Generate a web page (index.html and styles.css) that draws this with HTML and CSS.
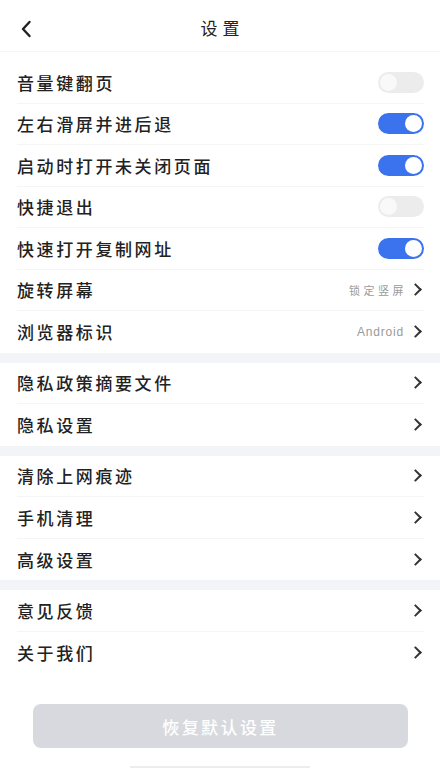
FILE: index.html
```html
<!DOCTYPE html>
<html lang="zh-CN">
<head>
    <meta charset="UTF-8">
    <meta name="viewport" content="width=device-width, initial-scale=1.0">
    <title>设置</title>
    <link rel="stylesheet" href="styles.css">
</head>
<body>
    <div class="page">
        <div class="header">
            <span class="back">
                <svg width="12" height="18" viewBox="0 0 12 18"><path d="M9.5 2 L3 9 L9.5 16" fill="none" stroke="#222" stroke-width="2.4" stroke-linecap="round" stroke-linejoin="round"/></svg>
            </span>
            <h1 class="title">设置</h1>
        </div>

        <div class="group first">
            <div class="row"><span class="label">音量键翻页</span><span class="switch"></span></div>
            <div class="row"><span class="label">左右滑屏并进后退</span><span class="switch on"></span></div>
            <div class="row"><span class="label">启动时打开未关闭页面</span><span class="switch on"></span></div>
            <div class="row"><span class="label">快捷退出</span><span class="switch"></span></div>
            <div class="row"><span class="label">快速打开复制网址</span><span class="switch on"></span></div>
            <div class="row"><span class="label">旋转屏幕</span><span class="value cn">锁定竖屏</span><span class="arrow"></span></div>
            <div class="row"><span class="label">浏览器标识</span><span class="value">Android</span><span class="arrow"></span></div>
        </div>

        <div class="group">
            <div class="row"><span class="label">隐私政策摘要文件</span><span class="arrow"></span></div>
            <div class="row"><span class="label">隐私设置</span><span class="arrow"></span></div>
        </div>

        <div class="group">
            <div class="row"><span class="label">清除上网痕迹</span><span class="arrow"></span></div>
            <div class="row"><span class="label">手机清理</span><span class="arrow"></span></div>
            <div class="row"><span class="label">高级设置</span><span class="arrow"></span></div>
        </div>

        <div class="group last">
            <div class="row"><span class="label">意见反馈</span><span class="arrow"></span></div>
            <div class="row"><span class="label">关于我们</span><span class="arrow"></span></div>
        </div>

        <div class="reset-wrap">
            <button class="reset">恢复默认设置</button>
        </div>
        <div class="home-bar"></div>
    </div>
</body>
</html>
```

FILE: styles.css
```css
body {
    margin: 0;
    background: #ffffff;
    font-family: "Noto Sans CJK SC", "Noto Sans", sans-serif;
    color: #1f1f1f;
}
.page {
    width: 440px;
    height: 770px;
    overflow: hidden;
    background: #ffffff;
}
.header {
    height: 52px;
    padding-top: 4px;
    display: flex;
    align-items: center;
    justify-content: center;
    position: relative;
    border-bottom: 1px solid #f5f5f5;
    box-sizing: border-box;
}
.back {
    position: absolute;
    left: 20px;
    top: 20px;
    display: flex;
}
.title {
    margin: 0 0 0 5px;
    font-size: 17px;
    font-weight: 400;
    letter-spacing: 5px;
    color: #222;
}
.group {
    border-bottom: 10px solid #f3f4f7;
}
.group.first {
    padding-top: 10px;
}
.group.last {
    border-bottom: none;
}
.row {
    height: 41.5px;
    margin: 0 16px 0 17px;
    display: flex;
    align-items: center;
    border-bottom: 1px solid #f5f5f5;
    box-sizing: border-box;
}
.row:last-child {
    border-bottom: none;
}
.label {
    flex: 1;
    font-size: 17px;
    font-weight: 500;
    letter-spacing: 2.6px;
    color: #222;
}
.value {
    font-family: "Liberation Sans", "Noto Sans CJK SC", sans-serif;
    font-size: 12px;
    letter-spacing: 0.8px;
    color: #9a9a9a;
    margin-right: 7px;
}
.value.cn {
    font-family: "Noto Sans CJK SC", sans-serif;
    font-size: 11px;
    letter-spacing: 3.5px;
    margin-right: 4px;
}
.arrow {
    width: 7px;
    height: 7px;
    border-top: 2px solid #333;
    border-right: 2px solid #333;
    transform: rotate(45deg);
    margin-right: 4px;
}
.switch {
    width: 46px;
    height: 21px;
    border-radius: 11px;
    background: #ececec;
    position: relative;
}
.switch::after {
    content: "";
    position: absolute;
    top: 2px;
    left: 2px;
    width: 17px;
    height: 17px;
    border-radius: 50%;
    background: #f9f9f9;
}
.switch.on {
    background: #3b72ee;
}
.switch.on::after {
    left: auto;
    right: 2px;
    background: #ffffff;
}
.reset-wrap {
    padding: 31px 32px 0 33px;
}
.reset {
    width: 100%;
    height: 44px;
    border: none;
    border-radius: 8px;
    background: #d7d9de;
    color: #ffffff;
    font-family: "Noto Sans CJK SC", sans-serif;
    font-size: 17px;
    font-weight: 500;
    letter-spacing: 2.4px;
}
.home-bar {
    width: 180px;
    height: 2px;
    margin: 18px auto 0;
    background: #ececec;
    border-radius: 1px;
}
```
